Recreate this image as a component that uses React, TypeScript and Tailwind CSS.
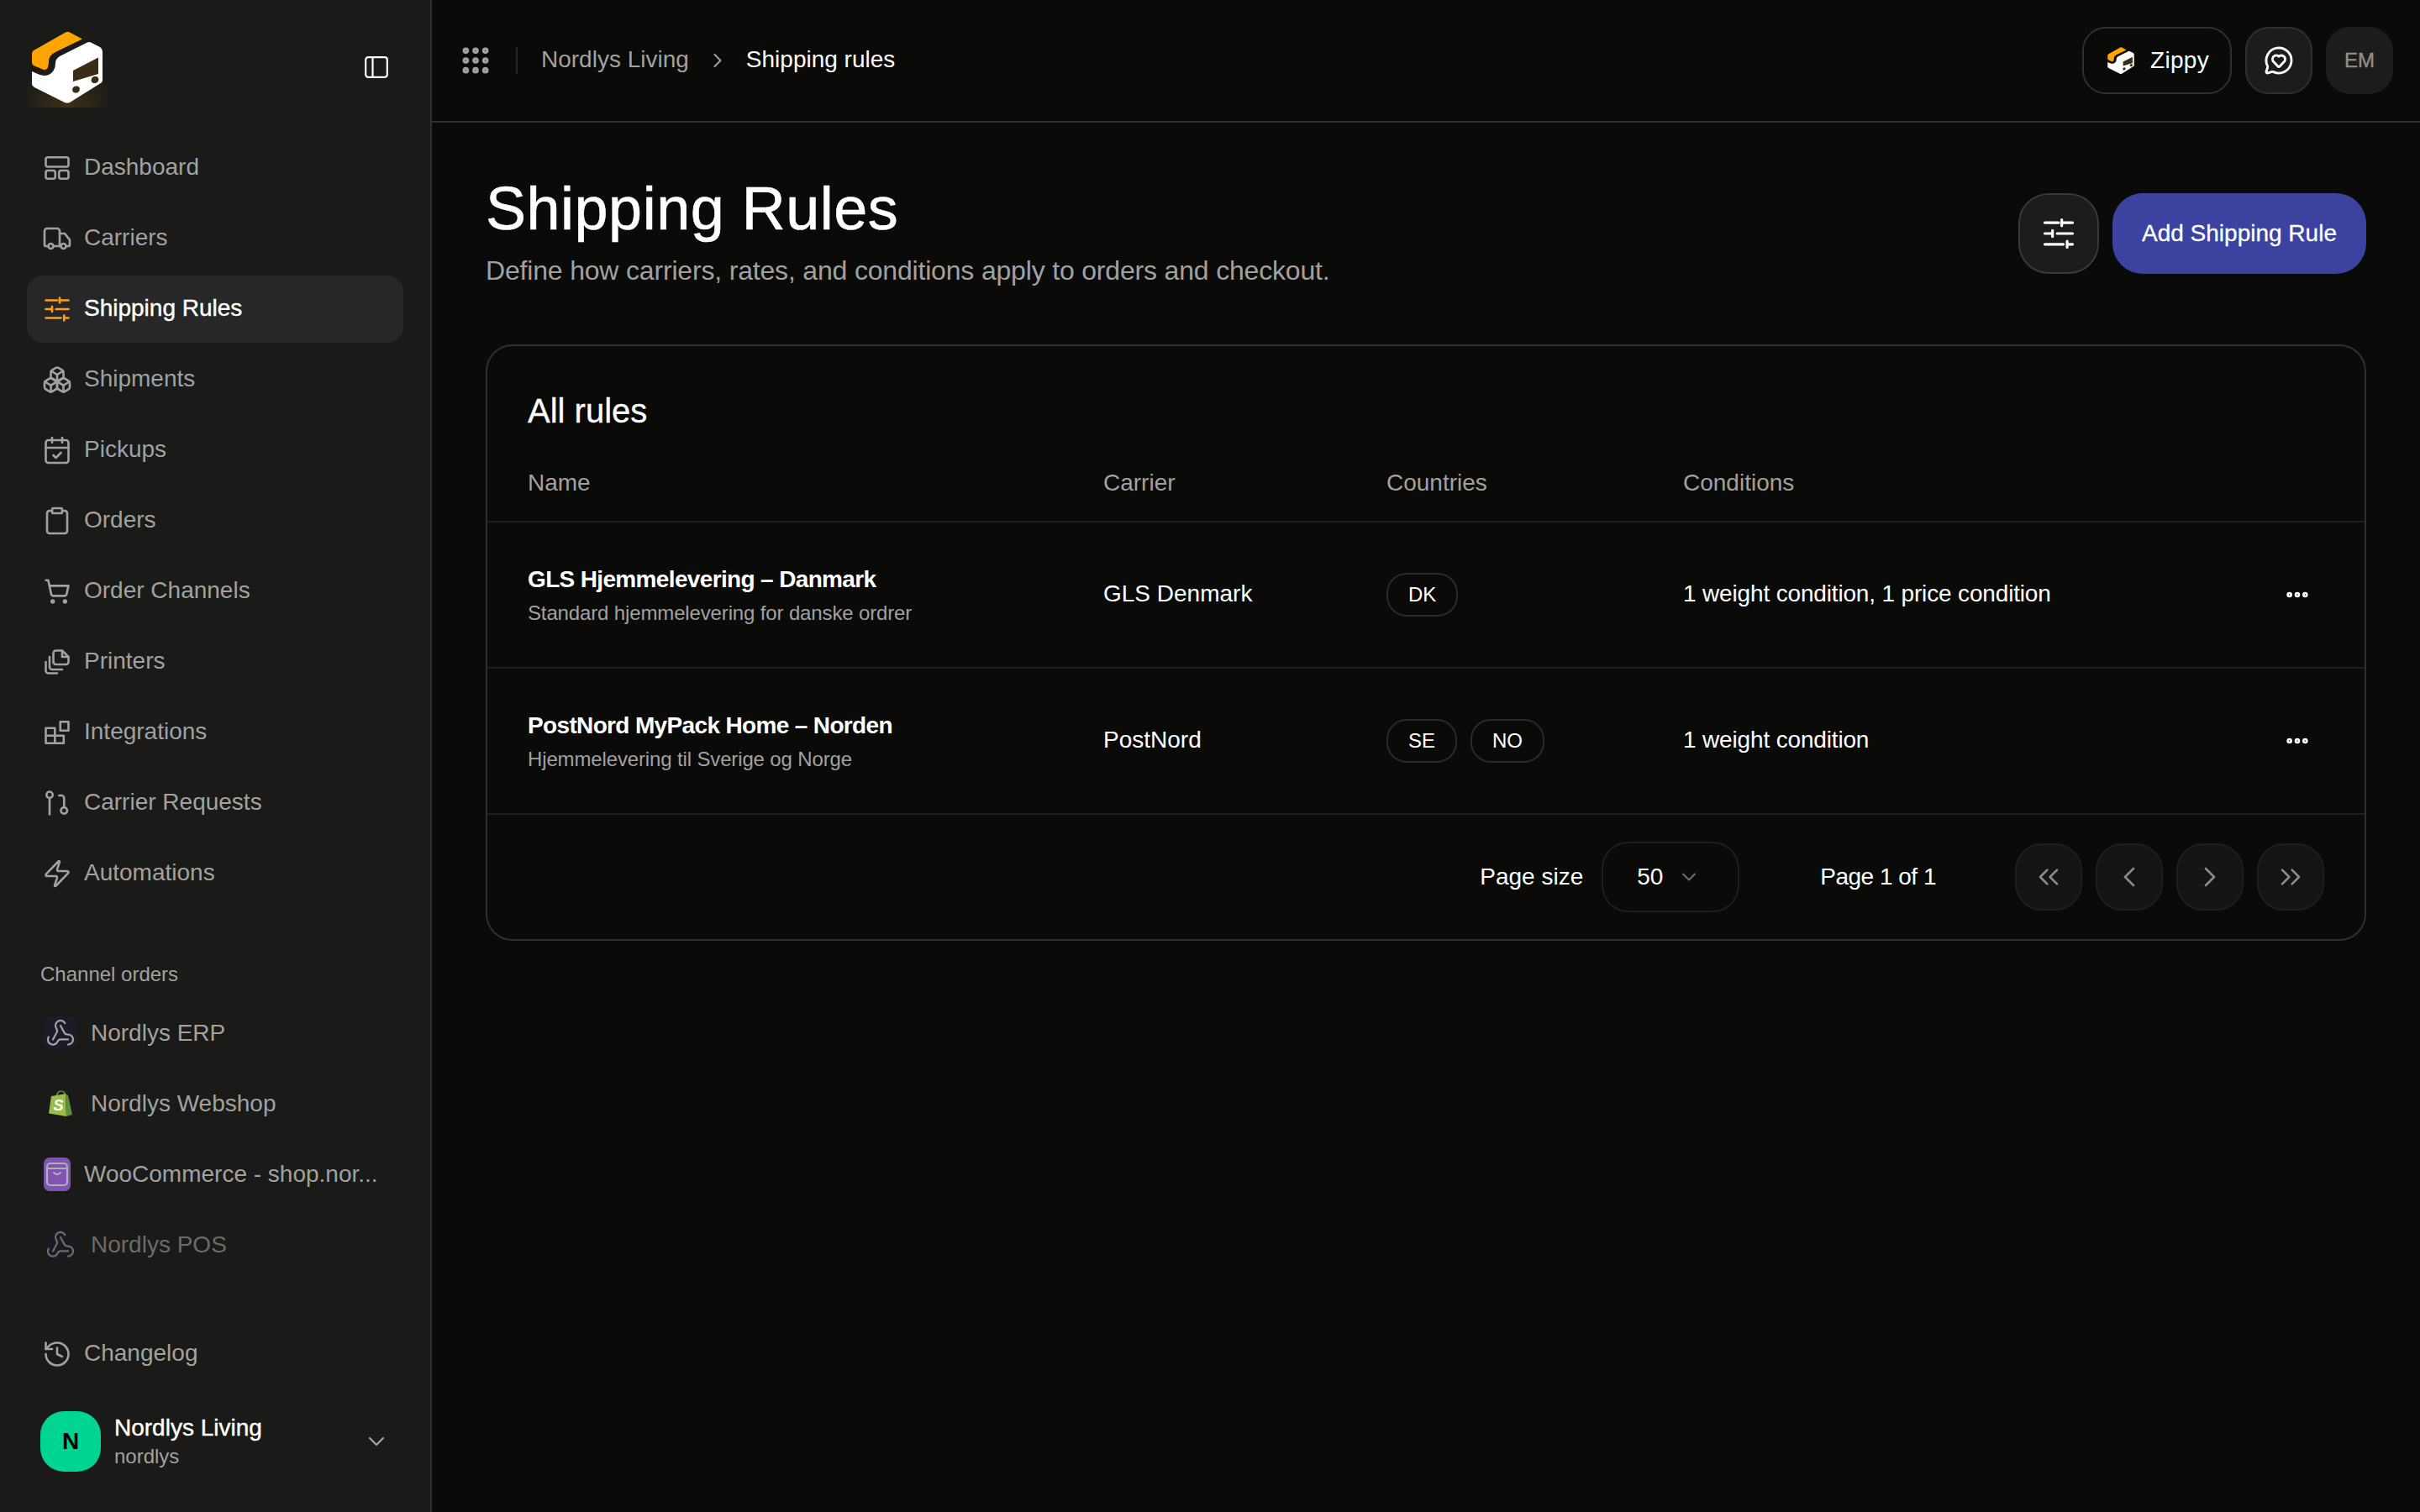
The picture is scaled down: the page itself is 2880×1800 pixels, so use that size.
import { ChevronDown, ChevronLeft, ChevronRight, ChevronsLeft, ChevronsRight, ClipboardIcon, Boxes, CalendarCheck, Ellipsis, Grip, History, MessageCircleHeart, ShoppingCart, Truck, Webhook, Zap } from 'lucide-react'
import { ReactNode } from 'react'

const Logo = ({ className, glow }: { className: string; glow?: boolean }) => (
  <svg viewBox="32 32 96 96" className={className}>
    <defs>
      <radialGradient id="logo-glow" cx="50%" cy="100%" r="60%">
        <stop offset="0%" stopColor="#ffa500" stopOpacity="0.16" />
        <stop offset="100%" stopColor="#ffa500" stopOpacity="0" />
      </radialGradient>
    </defs>
    {glow && <rect x="32" y="32" width="96" height="96" fill="url(#logo-glow)" />}
    <path d="M78 38.500 Q80 37 83 38.500 L98 46.500 L66 62 Q58 66 58 73 Q58 84 52 83 L41 78.500 Q38 77 38 74 L38 64 Q38 61 41 59.500 Z" fill="#ffa500" />
    <path d="M104 50.500 Q106 49.500 108 50.500 L119 56 Q122 58 122 61 L122 95 Q122 98 119 99.500 L83 122 Q80 123 77 122 L41 104 Q38 102.500 38 100 L38 85 L46 88.500 Q52 91 58 89 Q66 85 66 75 Q66 70 71 67 Z" fill="#fff" />
    <path d="M87 84 L117 68.500 L117 88 L87 97 Z" fill="#3a2c17" />
    <ellipse cx="90.500" cy="106.500" rx="4.500" ry="4" transform="rotate(-25 90.500 106.500)" fill="#3a2c17" />
    <ellipse cx="113" cy="95" rx="4.500" ry="4" transform="rotate(-25 113 95)" fill="#3a2c17" />
  </svg>
)

const svgProps = { viewBox: '0 0 24 24', fill: 'none', stroke: 'currentColor', strokeWidth: 1.75, strokeLinecap: 'round' as const, strokeLinejoin: 'round' as const }

const DashboardIcon = ({ className }: { className: string }) => (
  <svg {...svgProps} className={className}>
    <rect x="3" y="3.500" width="18" height="7.500" rx="1.500" />
    <rect x="3" y="14" width="7.500" height="6.500" rx="1.500" />
    <rect x="13.500" y="14" width="7.500" height="6.500" rx="1.500" />
  </svg>
)

const RulesIcon = ({ className }: { className: string }) => (
  <svg {...svgProps} className={className}>
    <path d="M3 5h9M14 5h7M14 3v4M3 12h5M8 10v4M11 12h10M3 19h12M17.500 19H21M17.500 17v4" />
  </svg>
)

const PrintersIcon = ({ className }: { className: string }) => (
  <svg {...svgProps} className={className}>
    <path d="M9 5a2 2 0 0 1 2-2h5l5 5v4a2 2 0 0 1-2 2h-8a2 2 0 0 1-2-2z" />
    <path d="M16 3v5h5" />
    <path d="M6 8v8a2 2 0 0 0 2 2h8" />
    <path d="M3 12v7a2 2 0 0 0 2 2h7" />
  </svg>
)

const IntegrationsIcon = ({ className }: { className: string }) => (
  <svg {...svgProps} className={className}>
    <rect x="14.500" y="3.500" width="6.500" height="7" />
    <path d="M3 8.500h7.200v6H17.200v6H3zM3 14.500h7.200M10.200 14.500v6" />
  </svg>
)

const RequestsIcon = ({ className }: { className: string }) => (
  <svg {...svgProps} className={className}>
    <circle cx="6" cy="5.500" r="2.500" />
    <path d="M6 8v13" />
    <circle cx="17.500" cy="18" r="2.500" />
    <path d="M17.500 15.500V8a2 2 0 0 0-2-2h-2" />
  </svg>
)

const SidebarToggleIcon = () => (
  <svg viewBox="0 0 28 26" fill="none" stroke="currentColor" strokeWidth="2.200" className="h-[26px] w-7 text-white">
    <rect x="1.200" y="1.200" width="25.600" height="23.600" rx="3" />
    <path d="M9.500 1.200v23.600" />
  </svg>
)

const WooIcon = () => (
  <svg viewBox="0 0 32 40" className="h-10 w-8 shrink-0">
    <rect width="32" height="40" rx="7" fill="#7f54b3" />
    <g fill="none" stroke="#b3b0b3" strokeWidth="2.200" strokeLinecap="round">
      <rect x="4" y="7" width="24" height="26" rx="4" />
      <path d="M4 13h24" />
      <path d="M12 18q4 4 8 0" />
    </g>
  </svg>
)

const ShopifyIcon = () => (
  <span className="flex h-10 w-10 shrink-0 items-center justify-center">
    <svg viewBox="0 0 28 32" className="h-8 w-7">
      <path d="M9 7 Q11 0.500 15 1 Q19 1 20 6" fill="none" stroke="#7ba83c" strokeWidth="1.200" />
      <path d="M3 7 L20 4 L21 31 L0 27.500 Z" fill="#95bf47" />
      <path d="M20 4 L23 6 L28 29 L21 31 Z" fill="#5e8e3e" />
      <text x="5.500" y="24" fill="#fff" fontSize="18" fontWeight="700" fontStyle="italic" fontFamily="Liberation Sans, sans-serif">S</text>
    </svg>
  </span>
)

const WebhookBox = () => (
  <span className="flex h-10 w-10 shrink-0 items-center justify-center rounded-[10px] bg-[#1b1b29]">
    <Webhook className="h-9 w-9 text-[#a1a1a0]" strokeWidth={1.5} />
  </span>
)

const navItems: { label: string; icon: ReactNode; active?: boolean }[] = [
  { label: 'Dashboard', icon: <DashboardIcon className="h-9 w-9 shrink-0" /> },
  { label: 'Carriers', icon: <Truck className="h-9 w-9 shrink-0" strokeWidth={1.75} /> },
  { label: 'Shipping Rules', icon: <RulesIcon className="h-9 w-9 shrink-0 text-[#ff9f1a]" />, active: true },
  { label: 'Shipments', icon: <Boxes className="h-9 w-9 shrink-0" strokeWidth={1.75} /> },
  { label: 'Pickups', icon: <CalendarCheck className="h-9 w-9 shrink-0" strokeWidth={1.75} /> },
  { label: 'Orders', icon: <ClipboardIcon className="h-9 w-9 shrink-0" strokeWidth={1.75} /> },
  { label: 'Order Channels', icon: <ShoppingCart className="mx-0.5 h-8 w-8 shrink-0" strokeWidth={2} /> },
  { label: 'Printers', icon: <PrintersIcon className="h-9 w-9 shrink-0" /> },
  { label: 'Integrations', icon: <IntegrationsIcon className="h-9 w-9 shrink-0" /> },
  { label: 'Carrier Requests', icon: <RequestsIcon className="h-9 w-9 shrink-0" /> },
  { label: 'Automations', icon: <Zap className="h-9 w-9 shrink-0" strokeWidth={1.75} /> },
]

const NavItem = ({ label, icon, active }: { label: string; icon: ReactNode; active?: boolean }) => (
  <div className={active ? 'flex h-20 items-center gap-[14px] rounded-[20px] bg-[#272727] pl-[18px] text-white [-webkit-text-stroke:0.4px_#fff]' : 'flex h-20 items-center gap-[14px] pl-[18px] text-[#a1a1a0]'}>
    {icon}
    <span className="-translate-y-px">{label}</span>
  </div>
)

const Sidebar = () => (
  <aside className="flex h-full w-[514px] shrink-0 flex-col border-r-2 border-[#302f2d] bg-[#1a1a19] px-8 pb-12 text-[28px]">
    <div className="flex h-[128px] items-start justify-between">
      <Logo glow className="mt-8 h-24 w-24" />
      <button className="mt-[67px] mr-[18px]">
        <SidebarToggleIcon />
      </button>
    </div>

    <nav className="flex flex-col gap-1 pt-8">
      {navItems.map((item) => (
        <NavItem key={item.label} {...item} />
      ))}
    </nav>

    <p className="mt-[66px] pl-4 text-2xl leading-7 text-[#a1a1a0]">Channel orders</p>

    <div className="mt-4 flex flex-col gap-1 text-[#a1a1a0]">
      <div className="flex h-20 items-center gap-4 pl-5">
        <WebhookBox />
        <span>Nordlys ERP</span>
      </div>
      <div className="flex h-20 items-center gap-4 pl-5">
        <ShopifyIcon />
        <span>Nordlys Webshop</span>
      </div>
      <div className="flex h-20 items-center gap-4 pl-5">
        <WooIcon />
        <span>WooCommerce - shop.nor...</span>
      </div>
      <div className="flex h-20 items-center gap-4 pl-5 opacity-60">
        <WebhookBox />
        <span>Nordlys POS</span>
      </div>
    </div>

    <div className="mt-auto flex h-20 items-center gap-[14px] pl-[18px] text-[#a1a1a0]">
      <History className="h-9 w-9 shrink-0" strokeWidth={1.75} />
      <span className="-translate-y-px">Changelog</span>
    </div>

    <div className="mt-7 flex items-center pl-4">
      <span className="flex h-[72px] w-[72px] shrink-0 items-center justify-center rounded-[28px] bg-[#00d492] font-bold text-black">N</span>
      <div className="ml-4 flex flex-col">
        <span className="leading-9 text-white [-webkit-text-stroke:0.4px_#fff]">Nordlys Living</span>
        <span className="text-2xl leading-8 text-[#a1a1a0]">nordlys</span>
      </div>
      <ChevronDown className="mr-[16px] ml-auto h-8 w-8 text-[#a1a1a0]" strokeWidth={1.75} />
    </div>
  </aside>
)

const Header = () => (
  <header className="flex h-[146px] shrink-0 items-center border-b-2 border-[#302f2d] pr-8 pl-[32px] text-[28px]">
    <Grip className="h-10 w-10 text-[#a1a1a0]" strokeWidth={2.6} />
    <span className="mx-[28px] h-8 w-0.5 bg-[#262625]" />
    <span className="-translate-y-px text-[#a1a1a0]">Nordlys Living</span>
    <ChevronRight className="mx-[20px] h-7 w-7 text-[#a1a1a0]" strokeWidth={1.75} />
    <span className="-translate-y-px text-white">Shipping rules</span>

    <div className="ml-auto flex items-center gap-4">
      <button className="flex h-20 w-[178px] items-center gap-[17px] rounded-[28px] border-2 border-[#302f2d] pl-[26px] tracking-[0.3px] text-white">
        <Logo className="h-9 w-9" />
        Zippy
      </button>
      <button className="flex h-20 w-20 items-center justify-center rounded-[28px] border-2 border-[#302f2d] bg-[#1c1c1b] text-white">
        <MessageCircleHeart className="h-9 w-9" strokeWidth={1.9} />
      </button>
      <span className="flex h-20 w-20 items-center justify-center rounded-[28px] bg-[#1c1c1b] text-[24px] text-[#8f8f8e] [-webkit-text-stroke:0.4px_#8f8f8e]">EM</span>
    </div>
  </header>
)

const CountryBadge = ({ code }: { code: string }) => (
  <span className="flex h-[52px] items-center rounded-[24px] border-2 border-[#2a2a29] px-6 text-2xl text-white">{code}</span>
)

const rules = [
  { name: 'GLS Hjemmelevering – Danmark', description: 'Standard hjemmelevering for danske ordrer', carrier: 'GLS Denmark', countries: ['DK'], conditions: '1 weight condition, 1 price condition' },
  { name: 'PostNord MyPack Home – Norden', description: 'Hjemmelevering til Sverige og Norge', carrier: 'PostNord', countries: ['SE', 'NO'], conditions: '1 weight condition' },
]

const pagerButtons = [ChevronsLeft, ChevronLeft, ChevronRight, ChevronsRight]

const RulesTable = () => (
  <section className="mt-[68px] rounded-[32px] border-2 border-[#302f2d] text-[28px]">
    <h2 className="pt-[53px] pl-12 text-[40px] leading-12 text-white [-webkit-text-stroke:0.3px_#fff]">All rules</h2>

    <div className="mt-[25px] grid h-[84px] grid-cols-[685px_337px_353px_1fr] items-center border-b-2 border-[#1e1e1d] pb-2 pl-12 text-[#a1a1a0]">
      <span>Name</span>
      <span>Carrier</span>
      <span>Countries</span>
      <span>Conditions</span>
    </div>

    {rules.map((rule) => (
      <div key={rule.name} className="grid h-[174px] grid-cols-[685px_337px_353px_1fr] items-center border-b-2 border-[#1e1e1d] pl-12 text-white">
        <div className="flex flex-col gap-2 pt-1">
          <span className="leading-8 font-bold tracking-[-0.65px]">{rule.name}</span>
          <span className="text-2xl leading-8 tracking-[-0.14px] text-[#a1a1a0]">{rule.description}</span>
        </div>
        <span className="-translate-y-px">{rule.carrier}</span>
        <div className="flex gap-4">
          {rule.countries.map((code) => (
            <CountryBadge key={code} code={code} />
          ))}
        </div>
        <div className="flex items-center justify-between pr-[64px]">
          <span className="-translate-y-px tracking-[-0.16px]">{rule.conditions}</span>
          <Ellipsis className="h-8 w-8" strokeWidth={3} />
        </div>
      </div>
    ))}

    <div className="flex h-[148px] items-center justify-end pr-12 text-white">
      <span>Page size</span>
      <button className="ml-[22px] flex h-[84px] w-[164px] items-center gap-[17px] rounded-[32px] border-2 border-[#1e1e1d] pl-10">
        <span>50</span>
        <ChevronDown className="h-7 w-7 text-[#6f6f6e]" strokeWidth={1.75} />
      </button>
      <span className="mr-[94px] ml-[96px] tracking-[-0.5px]">Page 1 of 1</span>
      <div className="flex gap-4">
        {pagerButtons.map((Icon, index) => (
          <button key={index} className="flex h-20 w-20 items-center justify-center rounded-[32px] border-2 border-[#1e1e1d] bg-[#141413] text-[#8a8a89]">
            <Icon className="h-10 w-10" strokeWidth={1.6} />
          </button>
        ))}
      </div>
    </div>
  </section>
)

export default function App() {
  return (
    <div className="flex h-screen w-full overflow-hidden bg-[#0a0a09] font-['Liberation_Sans',sans-serif]">
      <Sidebar />
      <main className="flex min-w-0 flex-1 flex-col">
        <Header />
        <div className="px-[64px] pt-[66px]">
          <div className="flex items-start justify-between">
            <div>
              <h1 className="text-[72px] leading-[72px] tracking-[0.5px] text-white [-webkit-text-stroke:0.6px_#fff]">Shipping Rules</h1>
              <p className="mt-[18px] text-[32px] leading-10 tracking-[-0.18px] text-[#a1a1a0]">Define how carriers, rates, and conditions apply to orders and checkout.</p>
            </div>
            <div className="mt-[18px] flex gap-4">
              <button className="flex h-24 w-24 items-center justify-center rounded-[36px] border-2 border-[#3a3937] bg-[#1c1c1b] text-white">
                <RulesIcon className="h-11 w-11" />
              </button>
              <button className="h-24 w-[302px] rounded-[36px] bg-[#3b429f] text-[28px] text-white [-webkit-text-stroke:0.3px_#fff]">Add Shipping Rule</button>
            </div>
          </div>
          <RulesTable />
        </div>
      </main>
    </div>
  )
}
